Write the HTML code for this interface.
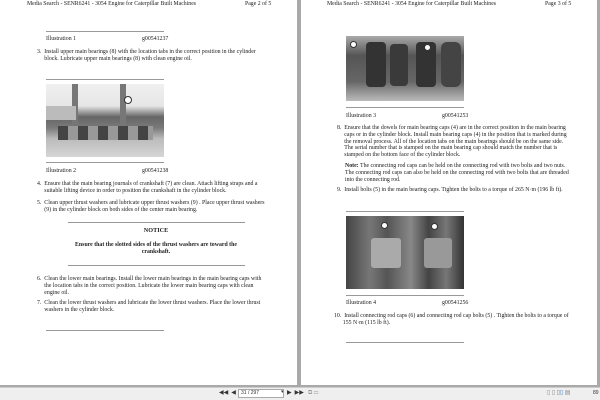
<!DOCTYPE html>
<html><head><meta charset="utf-8"><style>
*{margin:0;padding:0;box-sizing:border-box}
body{width:600px;height:400px;background:#a9a9a9;position:relative;overflow:hidden;font-family:"Liberation Serif",serif;color:#222}
.pg{position:absolute;top:0;height:385px;background:#fff}
.t{position:absolute;font-size:5.85px;line-height:6.8px;white-space:nowrap}
.ln{position:absolute;height:1px;background:#999}
.img{position:absolute;background:#888}
.b{font-weight:bold}
.tb{position:absolute;left:0;top:387px;width:600px;height:13px;background:#efefef;border-top:1px solid #ccc}
</style></head><body>
<div class="pg" style="left:0;width:297px"></div>
<div class="pg" style="left:301px;width:296px"></div>

<!-- left page -->
<div class="t" style="left:27px;top:1px;font-size:5.8px">Media Search - SENR6241 - 3054 Engine for Caterpillar Built Machines</div>
<div class="t" style="left:245px;top:1px;font-size:5.8px">Page 2 of 5</div>
<div class="ln" style="left:46px;top:31px;width:118px"></div>
<div class="t" style="left:46px;top:36px">Illustration 1</div>
<div class="t" style="left:142px;top:36px">g00541237</div>
<div class="t" style="left:37px;top:49px">3.&nbsp; Install upper main bearings (8) with the location tabs in the correct position in the cylinder<br>&nbsp;&nbsp;&nbsp;&nbsp;&nbsp;block. Lubricate upper main bearings (8) with clean engine oil.</div>
<div class="ln" style="left:46px;top:79px;width:118px"></div>
<div class="img" style="left:46px;top:84px;width:118px;height:73px;background:linear-gradient(180deg,#f0f0f0 0%,#e6e6e6 30%,#666 45%,#7a7a7a 60%,#bbb 75%,#d6d6d6 100%)">
 <div style="position:absolute;left:26px;top:0;width:6px;height:40px;background:#777"></div>
 <div style="position:absolute;left:74px;top:0;width:6px;height:45px;background:#777"></div>
 <div style="position:absolute;left:0;top:22px;width:30px;height:14px;background:#bbb"></div>
 <div style="position:absolute;left:12px;top:42px;width:95px;height:14px;background:repeating-linear-gradient(90deg,#444 0 10px,#999 10px 20px)"></div>
 <div style="position:absolute;left:78px;top:12px;width:8px;height:8px;border-radius:50%;background:#fff;border:1px solid #333"></div>
</div>
<div class="ln" style="left:46px;top:162px;width:118px"></div>
<div class="t" style="left:46px;top:168px">Illustration 2</div>
<div class="t" style="left:142px;top:168px">g00541238</div>
<div class="t" style="left:37px;top:181px">4.&nbsp; Ensure that the main bearing journals of crankshaft (7) are clean. Attach lifting straps and a<br>&nbsp;&nbsp;&nbsp;&nbsp;&nbsp;suitable lifting device in order to position the crankshaft in the cylinder block.</div>
<div class="t" style="left:37px;top:200px">5.&nbsp; Clean upper thrust washers and lubricate upper thrust washers (9) . Place upper thrust washers<br>&nbsp;&nbsp;&nbsp;&nbsp;&nbsp;(9) in the cylinder block on both sides of the center main bearing.</div>
<div class="ln" style="left:68px;top:222px;width:177px"></div>
<div class="t b" style="left:0;width:312px;text-align:center;top:228px;font-size:6.2px">NOTICE</div>
<div class="t b" style="left:0;width:312px;text-align:center;top:242px">Ensure that the slotted sides of the thrust washers are toward the<br>crankshaft.</div>
<div class="ln" style="left:68px;top:265px;width:177px"></div>
<div class="t" style="left:37px;top:276px">6.&nbsp; Clean the lower main bearings. Install the lower main bearings in the main bearing caps with<br>&nbsp;&nbsp;&nbsp;&nbsp;&nbsp;the location tabs in the correct position. Lubricate the lower main bearing caps with clean<br>&nbsp;&nbsp;&nbsp;&nbsp;&nbsp;engine oil.</div>
<div class="t" style="left:37px;top:300px">7.&nbsp; Clean the lower thrust washers and lubricate the lower thrust washers. Place the lower thrust<br>&nbsp;&nbsp;&nbsp;&nbsp;&nbsp;washers in the cylinder block.</div>
<div class="ln" style="left:46px;top:330px;width:118px"></div>

<!-- right page -->
<div class="t" style="left:327px;top:1px;font-size:5.8px">Media Search - SENR6241 - 3054 Engine for Caterpillar Built Machines</div>
<div class="t" style="left:545px;top:1px;font-size:5.8px">Page 3 of 5</div>
<div class="img" style="left:346px;top:36px;width:118px;height:65px;background:linear-gradient(180deg,#aaa,#555 30%,#666 70%,#bbb)">
 <div style="position:absolute;left:20px;top:6px;width:20px;height:45px;background:#333;border-radius:4px"></div>
 <div style="position:absolute;left:44px;top:8px;width:18px;height:42px;background:#3a3a3a;border-radius:4px"></div>
 <div style="position:absolute;left:70px;top:6px;width:20px;height:45px;background:#333;border-radius:4px"></div>
 <div style="position:absolute;left:95px;top:6px;width:20px;height:45px;background:#444;border-radius:6px"></div>
 <div style="position:absolute;left:4px;top:5px;width:7px;height:7px;border-radius:50%;background:#fff;border:1px solid #333"></div>
 <div style="position:absolute;left:78px;top:8px;width:7px;height:7px;border-radius:50%;background:#fff;border:1px solid #333"></div>
</div>
<div class="ln" style="left:346px;top:107px;width:118px"></div>
<div class="t" style="left:346px;top:113px">Illustration 3</div>
<div class="t" style="left:442px;top:113px">g00541253</div>
<div class="t" style="left:337px;top:125px">8.&nbsp; Ensure that the dowels for main bearing caps (4) are in the correct position in the main bearing<br>&nbsp;&nbsp;&nbsp;&nbsp;&nbsp;caps or in the cylinder block. Install main bearing caps (4) in the position that is marked during<br>&nbsp;&nbsp;&nbsp;&nbsp;&nbsp;the removal process. All of the location tabs on the main bearings should be on the same side.<br>&nbsp;&nbsp;&nbsp;&nbsp;&nbsp;The serial number that is stamped on the main bearing cap should match the number that is<br>&nbsp;&nbsp;&nbsp;&nbsp;&nbsp;stamped on the bottom face of the cylinder block.</div>
<div class="t" style="left:345px;top:163px"><b>Note:</b> The connecting rod caps can be held on the connecting rod with two bolts and two nuts.<br>The connecting rod caps can also be held on the connecting rod with two bolts that are threaded<br>into the connecting rod.</div>
<div class="t" style="left:337px;top:187px">9.&nbsp; Install bolts (5) in the main bearing caps. Tighten the bolts to a torque of 265 N·m (196 lb ft).</div>
<div class="ln" style="left:346px;top:211px;width:118px"></div>
<div class="img" style="left:346px;top:216px;width:118px;height:73px;background:linear-gradient(90deg,#444,#777 20%,#555 35%,#888 55%,#444 70%,#777 85%,#333)">
 <div style="position:absolute;left:25px;top:22px;width:30px;height:30px;background:#aaa;border-radius:3px"></div>
 <div style="position:absolute;left:78px;top:22px;width:28px;height:30px;background:#999;border-radius:3px"></div>
 <div style="position:absolute;left:35px;top:6px;width:7px;height:7px;border-radius:50%;background:#fff;border:1px solid #333"></div>
 <div style="position:absolute;left:85px;top:7px;width:7px;height:7px;border-radius:50%;background:#fff;border:1px solid #333"></div>
</div>
<div class="ln" style="left:346px;top:295px;width:118px"></div>
<div class="t" style="left:346px;top:300px">Illustration 4</div>
<div class="t" style="left:442px;top:300px">g00541256</div>
<div class="t" style="left:334px;top:313px">10.&nbsp; Install connecting rod caps (6) and connecting rod cap bolts (5) . Tighten the bolts to a torque of<br>&nbsp;&nbsp;&nbsp;&nbsp;&nbsp;&nbsp;155 N·m (115 lb ft).</div>
<div class="ln" style="left:346px;top:342px;width:118px"></div>

<!-- toolbar -->
<div class="tb"></div>
<div class="t" style="left:219px;top:390px;font-size:6px;color:#333">◀◀&nbsp;&nbsp;◀</div>
<div style="position:absolute;left:238px;top:389px;width:46px;height:9px;background:#fff;border:1px solid #aaa"></div>
<div class="t" style="left:241px;top:390px;font-family:'Liberation Sans',sans-serif;font-size:5px;color:#333">31 / 297</div>
<div class="t" style="left:281px;top:390px;font-size:5px;color:#333">▾</div>
<div class="t" style="left:287px;top:390px;font-size:6px;color:#333">▶&nbsp;&nbsp;▶▶</div>
<div class="t" style="left:308px;top:390px;font-size:6px;color:#999">⧉ ▭</div>
<div class="t" style="left:547px;top:390px;font-size:6px;color:#888">▯ ▯ <span style="color:#4a7fc0">▯▯</span> ▤</div>
<div class="t" style="left:593px;top:390px;font-family:'Liberation Sans',sans-serif;font-size:5px;color:#333">89</div>
</body></html>
